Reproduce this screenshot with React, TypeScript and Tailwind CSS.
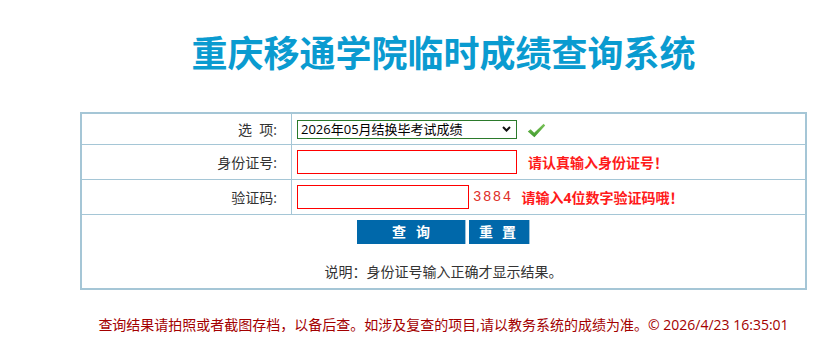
const font = "font-['Open_Sans','Noto_Sans_CJK_SC',sans-serif]";

const CheckIcon = () => (
  <svg width="19" height="15" viewBox="0 0 19 15" className="ml-[10px] mt-[2px]">
    <defs>
      <linearGradient id="ck" x1="0" y1="0" x2="0" y2="1">
        <stop offset="0" stopColor="#7cc35a" />
        <stop offset="1" stopColor="#3f9a2c" />
      </linearGradient>
    </defs>
    <path d="M0.8 8.4 L3.6 6.2 L7.2 9.8 L16.6 0.8 L18.2 2.4 L7.4 14.2 Z" fill="url(#ck)" />
  </svg>
);

const Chevron = () => (
  <svg width="9" height="6" viewBox="0 0 9 6">
    <path d="M1 1 L4.5 4.5 L8 1" fill="none" stroke="#111" strokeWidth="2" />
  </svg>
);

const Label = ({ children }: { children: React.ReactNode }) => (
  <div className="flex items-center justify-end pr-[14px] text-[14px] text-[#333] border-r border-[#a5c6d6]">
    {children}
  </div>
);

export default function App() {
  return (
    <div className={`${font} bg-white`}>
      <h1 className="pt-[36px] ml-[80px] w-[727px] text-center text-[36px] leading-none font-bold text-[#0a9bd0]">
        重庆移通学院临时成绩查询系统
      </h1>

      <div className="mt-[40px] ml-[80px] w-[727px] border-2 border-[#a5c6d6]">
        <div className="grid grid-cols-[210px_1fr] h-[31px] border-b border-[#a5c6d6]">
          <Label>选&nbsp;&nbsp;项:</Label>
          <div className="flex items-center pl-[5px]">
            <div className="w-[220px] h-[19px] border border-[#2b7a2b] bg-white flex items-center justify-between pl-[3px] pr-[5px]">
              <span className="text-[13px] leading-none text-black">2026年05月结换毕考试成绩</span>
              <Chevron />
            </div>
            <CheckIcon />
          </div>
        </div>

        <div className="grid grid-cols-[210px_1fr] h-[35px] border-b border-[#a5c6d6]">
          <Label>身份证号:</Label>
          <div className="flex items-center pl-[5px]">
            <input className="w-[220px] h-[24px] border border-[#ff0000] bg-white outline-none" />
            <span className="ml-[11px] text-[14px] font-bold text-[#ff1a1a]">请认真输入身份证号！</span>
          </div>
        </div>

        <div className="grid grid-cols-[210px_1fr] h-[35px] border-b border-[#a5c6d6]">
          <Label>验证码:</Label>
          <div className="flex items-center pl-[5px]">
            <input className="w-[172px] h-[24px] border border-[#ff0000] bg-white outline-none" />
            <span className="ml-[4px] font-['Liberation_Mono',monospace] text-[14px] tracking-[1.5px] text-[#e0302a]">3884</span>
            <span className="ml-[9px] text-[14px] font-bold text-[#ff1a1a]">请输入4位数字验证码哦！</span>
          </div>
        </div>

        <div className="h-[73px] flex flex-col items-center pt-[5px]">
          <div className="flex gap-[3px]">
            <button className="w-[109px] h-[24px] bg-[#0068aa] border-r border-[#9cc2dc] text-white text-[14px] font-bold tracking-[10px] pl-[10px] leading-none">
              查询
            </button>
            <button className="w-[61px] h-[24px] bg-[#0068aa] border-r border-[#9cc2dc] text-white text-[14px] font-bold tracking-[9px] pl-[6px] leading-none">
              重置
            </button>
          </div>
          <p className="mt-[21px] text-[14px] leading-none text-[#333]">说明：身份证号输入正确才显示结果。</p>
        </div>
      </div>

      <p className="mt-[28px] ml-[80px] w-[727px] text-center text-[14px] leading-none text-[#a30000]">
        查询结果请拍照或者截图存档，以备后查。如涉及复查的项目,请以教务系统的成绩为准。© 2026/4/23 16:35:01
      </p>
    </div>
  );
}
